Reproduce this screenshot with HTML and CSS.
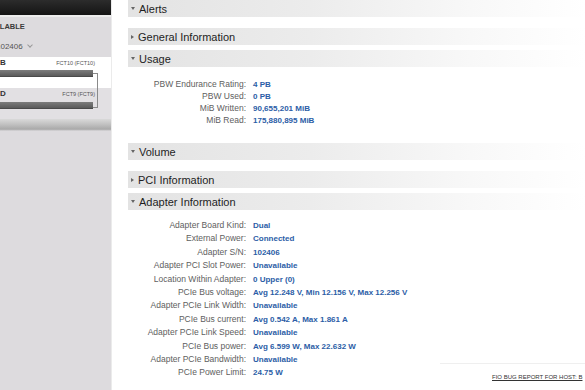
FILE: index.html
```html
<!DOCTYPE html>
<html>
<head>
<meta charset="utf-8">
<link rel="stylesheet" href="styles.css">
</head>
<body>
<div class="page">
  <aside class="sidebar">
    <div class="topbar"></div>
    <div class="sb-title"><span class="cut-title">AVAILABLE</span></div>
    <div class="sb-adapter"><span class="cut-sn">102406</span><span class="caret"></span></div>
    <div class="devices">
      <div class="device device-sel">
        <div class="dev-line"><span class="dev-name">B</span><span class="dev-fct">FCT10 (FCT10)</span></div>
        <div class="dev-bar"></div>
      </div>
      <div class="device">
        <div class="dev-line"><span class="dev-name">D</span><span class="dev-fct">FCT9 (FCT9)</span></div>
        <div class="dev-bar dev-bar2"></div>
      </div>
    </div>
    <div class="sb-shadow"></div>
  </aside>

  <main class="main">
    <section class="section sec-empty">
      <div class="section-head"><span class="tri tri-down"></span>Alerts</div>
    </section>
    <section class="section sec-collapsed">
      <div class="section-head"><span class="tri tri-right"></span>General Information</div>
    </section>
    <section class="section">
      <div class="section-head"><span class="tri tri-down"></span>Usage</div>
      <div class="kv kv-usage">
        <span class="k">PBW Endurance Rating:</span><span class="v">4 PB</span>
        <span class="k">PBW Used:</span><span class="v">0 PB</span>
        <span class="k">MiB Written:</span><span class="v">90,655,201 MiB</span>
        <span class="k">MiB Read:</span><span class="v">175,880,895 MiB</span>
      </div>
    </section>
    <section class="section sec-empty">
      <div class="section-head"><span class="tri tri-down"></span>Volume</div>
    </section>
    <section class="section sec-collapsed">
      <div class="section-head"><span class="tri tri-right"></span>PCI Information</div>
    </section>
    <section class="section">
      <div class="section-head"><span class="tri tri-down"></span>Adapter Information</div>
      <div class="adapter-body">
        <div class="kv kv-adapter">
          <span class="k">Adapter Board Kind:</span><span class="v">Dual</span>
          <span class="k">External Power:</span><span class="v">Connected</span>
          <span class="k">Adapter S/N:</span><span class="v">102406</span>
          <span class="k">Adapter PCI Slot Power:</span><span class="v">Unavailable</span>
          <span class="k">Location Within Adapter:</span><span class="v">0 Upper (0)</span>
          <span class="k">PCIe Bus voltage:</span><span class="v">Avg 12.248 V, Min 12.156 V, Max 12.256 V</span>
          <span class="k">Adapter PCIe Link Width:</span><span class="v">Unavailable</span>
          <span class="k">PCIe Bus current:</span><span class="v">Avg 0.542 A, Max 1.861 A</span>
          <span class="k">Adapter PCIe Link Speed:</span><span class="v">Unavailable</span>
          <span class="k">PCIe Bus power:</span><span class="v">Avg 6.599 W, Max 22.632 W</span>
          <span class="k">Adapter PCIe Bandwidth:</span><span class="v">Unavailable</span>
          <span class="k">PCIe Power Limit:</span><span class="v">24.75 W</span>
        </div>
        <div class="footer"><a class="bug-link">FIO BUG REPORT FOR HOST: B</a></div>
      </div>
    </section>
  </main>
</div>
</body>
</html>
```

FILE: styles.css
```css
html, body {
  margin: 0;
  padding: 0;
  width: 585px;
  height: 390px;
  overflow: hidden;
  background: #ffffff;
  font-family: "Liberation Sans", Arial, sans-serif;
}

.page {
  display: flex;
  height: 390px;
}

/* ---------- sidebar ---------- */
.sidebar {
  width: 111px;
  flex: none;
  background: #dddbde;
  border-right: 1px solid #ebebeb;
  display: flex;
  flex-direction: column;
  overflow: hidden;
}

.topbar {
  height: 15px;
  background: linear-gradient(#2c2c2c, #141414);
  border-bottom: 2px solid #ececec;
}

.sb-title {
  height: 18px;
  display: flex;
  align-items: center;
  font-size: 7.5px;
  font-weight: bold;
  color: #3a3a3a;
  white-space: nowrap;
}

.cut-title {
  margin-left: -17px;
}

.sb-adapter {
  height: 22px;
  display: flex;
  align-items: center;
  gap: 5px;
  font-size: 8px;
  color: #555;
  white-space: nowrap;
}

.cut-sn {
  margin-left: -4px;
}

.caret {
  width: 3px;
  height: 3px;
  border-right: 1px solid #999;
  border-bottom: 1px solid #999;
  transform: rotate(45deg);
  margin-top: -3px;
}

.devices {
  position: relative;
}

.devices::after {
  content: "";
  position: absolute;
  left: 93px;
  top: 16px;
  width: 4px;
  height: 33px;
  border: 1px solid #8a8a8a;
  border-left: none;
}

.device {
  padding-top: 1px;
  height: 30px;
  background: #e2e0e3;
}

.device-sel {
  background: #ffffff;
}

.dev-line {
  display: flex;
  align-items: center;
  justify-content: space-between;
  width: 95px;
  height: 9px;
}

.dev-name {
  font-size: 8px;
  font-weight: bold;
  color: #333;
}

.dev-fct {
  font-size: 5.5px;
  color: #555;
  white-space: nowrap;
}

.dev-bar {
  width: 93px;
  height: 6px;
  margin-top: 3px;
  background: linear-gradient(#7c7c7c, #5a5a5a);
  border-bottom: 1px solid #4a4a4a;
}

.dev-bar2 {
  margin-top: 4px;
}

.sb-shadow {
  height: 12px;
  background: linear-gradient(#d9d9d9, #c4c4c4 40%, #a9a9a9 85%, #dcdadd);
}

/* ---------- main ---------- */
.main {
  flex: 1;
  min-width: 0;
  padding-left: 16px;
}

.section-head {
  height: 17px;
  display: flex;
  align-items: center;
  gap: 4px;
  padding-left: 3px;
  background: linear-gradient(to right, #e3e3e3 0%, #ececec 40%, #f8f8f8 75%, #ffffff 100%);
  font-size: 11px;
  color: #1e1e1e;
  white-space: nowrap;
}

.sec-empty {
  margin-bottom: 11px;
}

.sec-collapsed {
  margin-bottom: 5px;
}

.tri {
  width: 0;
  height: 0;
  flex: none;
}

.tri-down {
  border-left: 2.5px solid transparent;
  border-right: 2.5px solid transparent;
  border-top: 3px solid #666;
}

.tri-right {
  border-top: 2.5px solid transparent;
  border-bottom: 2.5px solid transparent;
  border-left: 3px solid #666;
}

.kv {
  display: grid;
  grid-template-columns: 118px auto;
  column-gap: 7px;
  align-items: baseline;
  white-space: nowrap;
}

.kv-usage {
  padding-top: 11px;
  padding-bottom: 17px;
  grid-auto-rows: 12px;
}

.kv-adapter {
  padding-top: 9px;
  grid-auto-rows: 13.4px;
}

.k {
  text-align: right;
  font-size: 8.5px;
  color: #5e5e5e;
  line-height: 12px;
}

.v {
  font-size: 8px;
  font-weight: bold;
  color: #2b5da6;
  line-height: 12px;
}

.adapter-body {
  display: flex;
}

.footer {
  margin-left: auto;
  align-self: flex-end;
  width: 93px;
  padding-left: 52px;
  padding-top: 5px;
  margin-bottom: -2px;
  border-top: 1px solid #efefef;
  white-space: nowrap;
  overflow: hidden;
  line-height: 9px;
}

.bug-link {
  font-size: 6px;
  color: #333;
  text-decoration: underline;
}
```
